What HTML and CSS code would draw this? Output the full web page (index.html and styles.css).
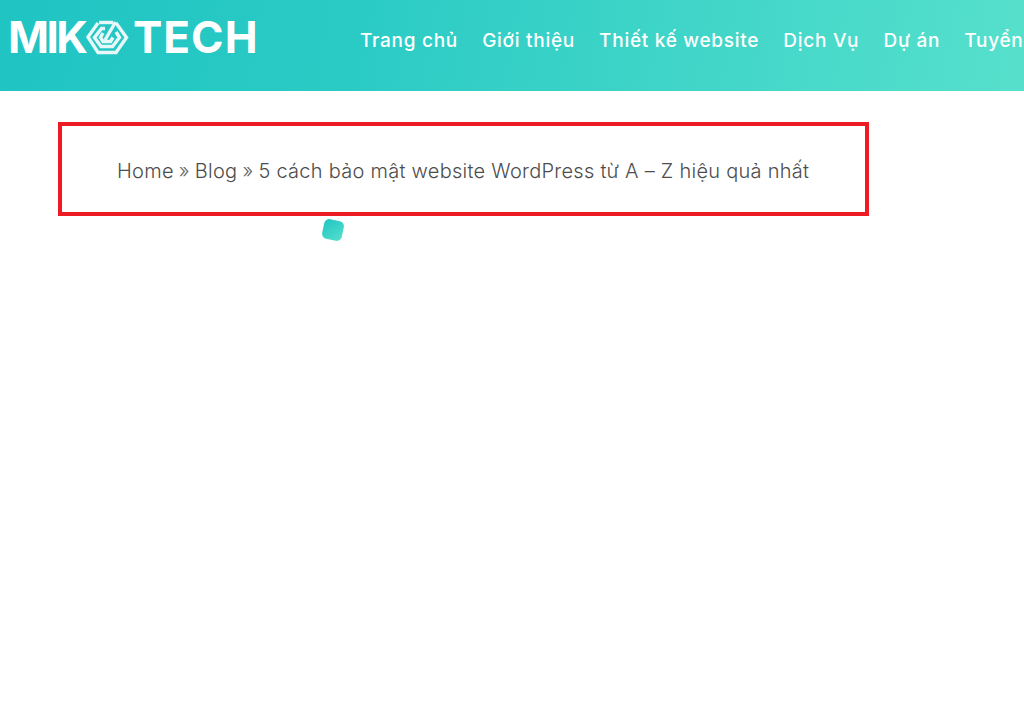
FILE: index.html
```html
<!DOCTYPE html>
<html lang="vi">
<head>
<meta charset="utf-8">
<title>5 cách bảo mật website WordPress</title>
<link rel="stylesheet" href="styles.css">
</head>
<body>
<header class="header">
  <a class="logo" href="#">
    <span class="logo-word logo-mik">MIK</span>
    <svg class="logo-mark" viewBox="0 0 44 36" aria-hidden="true">
      <g fill="none" stroke="#e6f8f7" stroke-width="3.4">
        <path d="M14 3.5H28"/>
        <path d="M31 4L41.5 18.5L31 33.5H13L3 18L13 4"/>
        <path d="M20 9.5H16.5L9.5 18.5L16 27.5H27.5L34.5 18.5L31 13"/>
        <path d="M30.5 3L20 21"/>
        <path d="M18 14L15.5 18.5L18 22.5H25.5L28 18.5"/>
      </g>
    </svg>
    <span class="logo-word logo-tech">TECH</span>
  </a>
  <nav class="nav">
    <a href="#">Trang chủ</a>
    <a href="#">Giới thiệu</a>
    <a href="#">Thiết kế website</a>
    <a href="#">Dịch Vụ</a>
    <a href="#">Dự án</a>
    <a href="#">Tuyển</a>
  </nav>
</header>
<main class="main">
  <div class="crumbs">
    <a href="#">Home</a> <span class="sep">»</span> <a href="#">Blog</a> <span class="sep">»</span> <span>5 cách bảo mật website WordPress từ A – Z hiệu quả nhất</span>
  </div>
  <div class="loader-row"><span class="loader"></span></div>
</main>
</body>
</html>
```

FILE: styles.css
```css
html, body {
  margin: 0;
  padding: 0;
  height: 100%;
  background: #fff;
  overflow: hidden;
}
body {
  font-family: "Inter", "Noto Sans", "Liberation Sans", sans-serif;
}
a {
  color: inherit;
  text-decoration: none;
}
.header {
  height: 91px;
  display: flex;
  align-items: flex-start;
  background: linear-gradient(100deg, #1fc4c3 0%, #2bcbc5 35%, #56e0cc 100%);
  color: #fff;
  white-space: nowrap;
  overflow: hidden;
}
.logo {
  display: flex;
  align-items: center;
  height: 36px;
  margin: 19px 0 0 8px;
  width: 248px;
  flex: none;
}
.logo-word {
  font-family: "Inter", sans-serif;
  font-weight: 700;
  font-size: 44px;
  line-height: 36px;
}
.logo-mik {
  width: 77px;
  flex: none;
  letter-spacing: -2.5px;
}
.logo-tech {
  margin-left: 4px;
  letter-spacing: 1px;
}
.logo-mark {
  width: 44px;
  height: 36px;
  flex: none;
}
.nav {
  display: flex;
  gap: 24.2px;
  margin: 30px 0 0 104px;
  font-size: 19px;
  font-weight: 500;
  line-height: 22px;
  letter-spacing: 0.72px;
}
.main {
  padding: 31px 0 0 58px;
}
.crumbs {
  box-sizing: border-box;
  width: 811px;
  height: 94px;
  border: 4px solid #ed1c24;
  padding: 3px 0 0 55px;
  display: flex;
  gap: 5px;
  align-items: center;
  font-size: 20px;
  font-weight: 300;
  letter-spacing: 0.27px;
  color: #4d4d4d;
  white-space: nowrap;
}
.sep {
  color: #666;
}
.loader-row {
  padding: 4px 0 0 265px;
}
.loader {
  display: block;
  width: 20px;
  height: 20px;
  border-radius: 5px;
  transform: rotate(12deg);
  background: linear-gradient(135deg, #1fc4c3, #56e0cc);
}
```
